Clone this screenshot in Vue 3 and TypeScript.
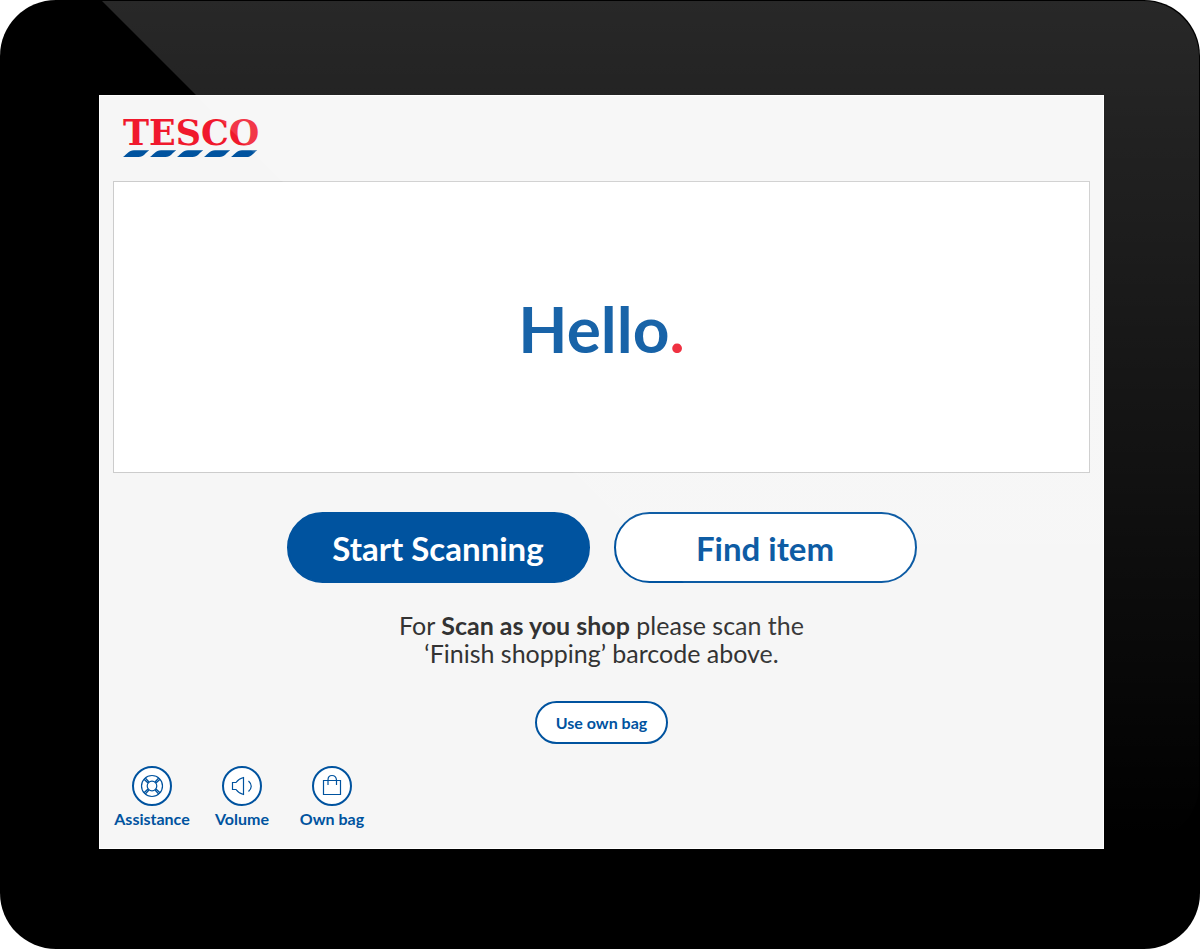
<script setup lang="ts">
type IconName = 'assistance' | 'volume' | 'bag'

interface Shortcut {
  label: string
  icon: IconName
}

const shortcuts: Shortcut[] = [
  { label: 'Assistance', icon: 'assistance' },
  { label: 'Volume', icon: 'volume' },
  { label: 'Own bag', icon: 'bag' },
]
</script>

<template>
  <div class="device">
    <main class="screen">
      <header class="brand">
        <span class="brand-name">TESCO</span>
        <svg class="brand-stripes" viewBox="0 0 135 7" aria-hidden="true">
          <path
            v-for="n in 5"
            :key="n"
            :transform="`translate(${(n - 1) * 27} 0)`"
            d="M0 7C4 4.500 5.500 0.300 11 0.300H26.300C22.500 2.500 21 7 15.500 7Z"
          />
        </svg>
      </header>

      <section class="welcome">
        <h1>Hello<span class="dot">.</span></h1>
      </section>

      <div class="actions">
        <button type="button" class="pill primary">Start Scanning</button>
        <button type="button" class="pill">Find item</button>
      </div>

      <p class="hint">
        For <strong>Scan as you shop</strong> please scan the<br />
        ‘Finish shopping’ barcode above.
      </p>

      <button type="button" class="pill small">Use own bag</button>

      <nav class="shortcuts">
        <button v-for="item in shortcuts" :key="item.label" type="button" class="shortcut">
          <span class="ring">
            <svg viewBox="0 0 40 40" aria-hidden="true">
              <g v-if="item.icon === 'assistance'">
                <circle cx="20" cy="20" r="10.500" />
                <circle cx="20" cy="20" r="4.800" />
                <path
                  d="M12 13.300L16 17M13.300 12L17 16M26.700 12L23 16M28 13.300L24 17M12 26.700L16 23M13.300 28L17 24M26.700 28L23 24M28 26.700L24 23"
                />
              </g>
              <g v-else-if="item.icon === 'volume'">
                <path d="M10.500 16.500H14Q17 12.500 21.500 11.500V28.500Q17 27.500 14 23.500H10.500Z" />
                <path d="M26.500 15Q32 20 26.500 25.500" />
              </g>
              <g v-else>
                <path d="M11.500 14.500H28.500V28.500H11.500Z" />
                <path d="M16 19V14Q16 9.500 20 9.500T24.500 14V19" />
              </g>
            </svg>
          </span>
          <span>{{ item.label }}</span>
        </button>
      </nav>
    </main>
  </div>
</template>

<style>
body {
  margin: 0;
  background: #fff;
}
</style>

<style scoped>
.device {
  --blue: #00539f;
  position: relative;
  box-sizing: border-box;
  min-height: 100vh;
  padding: 95px 96px 100px 99px;
  display: flex;
  background: #000;
  border-radius: 56px;
  overflow: hidden;
  font-family: Lato, "Open Sans", sans-serif;
}

/* Glass reflection running diagonally across the tablet */
.device::after {
  content: "";
  position: absolute;
  inset: 1px 1px 108px 0;
  border-radius: 0 56px 56px 0;
  background: linear-gradient(rgba(255, 255, 255, 0.155), rgba(255, 255, 255, 0));
  clip-path: polygon(102px 0, 100% 0, 100% 100%, 942px 100%);
  pointer-events: none;
}

.screen {
  flex: 1;
  box-sizing: border-box;
  min-width: 0;
  padding: 21px 13px 18px;
  border: 1px solid #fff;
  display: flex;
  flex-direction: column;
  align-items: center;
  background: #f6f6f6;
  color: #333;
}

.brand {
  align-self: flex-start;
  display: flex;
  flex-direction: column;
  gap: 1px;
  margin: 0 0 24px 10px;
}

.brand-name {
  color: #f0192d;
  font: bold 35px/32px "DejaVu Serif", serif;
}

.brand-stripes {
  width: 135px;
  height: 7px;
  fill: var(--blue);
}

.welcome {
  align-self: stretch;
  box-sizing: border-box;
  min-height: 292px;
  padding-top: 4px;
  border: 1px solid #ccc;
  display: flex;
  align-items: center;
  justify-content: center;
  background: #fff;
}

h1 {
  margin: 0;
  color: var(--blue);
  font-size: 64px;
  line-height: 72px;
  font-weight: 700;
}

.dot {
  color: #ee1c2e;
}

.actions {
  display: flex;
  flex-wrap: wrap;
  justify-content: center;
  gap: 24px;
  margin-top: 39px;
}

.pill {
  box-sizing: border-box;
  width: 303px;
  height: 71px;
  padding: 0;
  border: 2px solid var(--blue);
  border-radius: 36px;
  background: #fff;
  color: var(--blue);
  font: 700 33px/40px Lato, "Open Sans", sans-serif;
  cursor: pointer;
}

.pill.primary {
  background: var(--blue);
  color: #fff;
}

.pill.small {
  width: 133px;
  height: 43px;
  font-size: 16px;
  line-height: 20px;
}

.hint {
  margin: 28px 0 34px;
  font-size: 25px;
  line-height: 28px;
  text-align: center;
}

.shortcuts {
  align-self: flex-start;
  display: flex;
  gap: 12px;
  margin-top: 22px;
}

.shortcut {
  width: 78px;
  padding: 0;
  border: 0;
  display: flex;
  flex-direction: column;
  align-items: center;
  gap: 3px;
  background: none;
  color: var(--blue);
  font: 700 16px/20px Lato, "Open Sans", sans-serif;
  white-space: nowrap;
  cursor: pointer;
}

.ring {
  box-sizing: border-box;
  width: 40px;
  height: 40px;
  border: 2px solid var(--blue);
  border-radius: 50%;
  background: #fff;
}

.ring svg {
  display: block;
  width: 40px;
  height: 40px;
  margin: -2px;
  fill: none;
  stroke: var(--blue);
  stroke-width: 1.2;
}
</style>
